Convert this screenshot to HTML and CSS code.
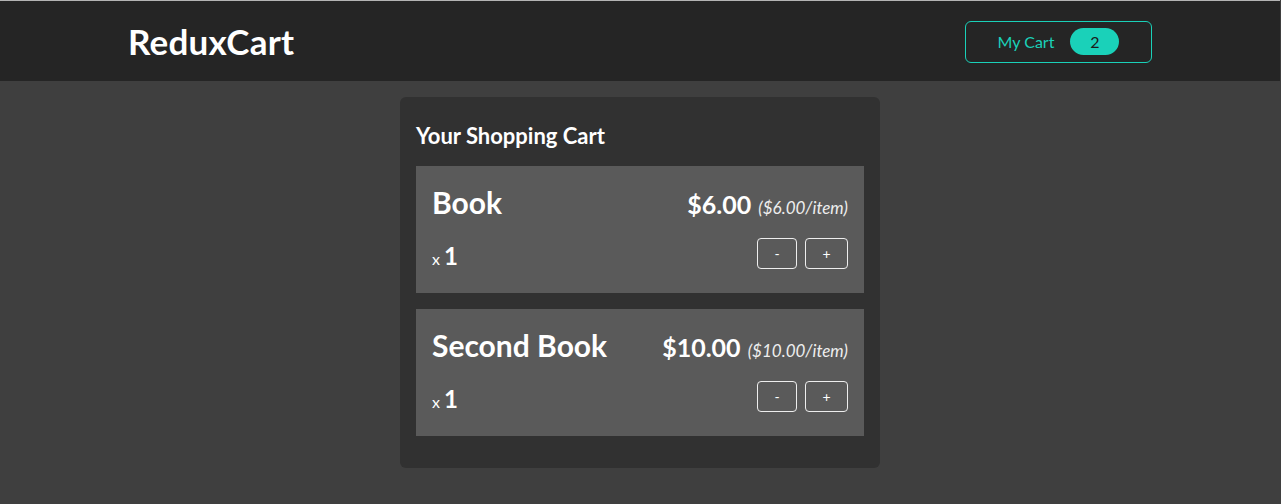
FILE: index.html
```html
<!DOCTYPE html>
<html lang="en">
<head>
<meta charset="utf-8">
<title>ReduxCart</title>
<link rel="stylesheet" href="styles.css">
</head>
<body>
<header class="main-header">
  <h1 class="logo">ReduxCart</h1>
  <button class="cart-button">
    <span>My Cart</span>
    <span class="badge">2</span>
  </button>
</header>
<main>
  <section class="cart">
    <h2 class="cart-title">Your Shopping Cart</h2>
    <ul class="cart-list">
      <li class="item">
        <div class="item-head">
          <h3 class="item-title">Book</h3>
          <div class="price">$6.00 <span class="item-price">($6.00/item)</span></div>
        </div>
        <div class="item-details">
          <div class="quantity">x <span class="qty">1</span></div>
          <div class="actions">
            <button class="act">-</button>
            <button class="act">+</button>
          </div>
        </div>
      </li>
      <li class="item">
        <div class="item-head">
          <h3 class="item-title">Second Book</h3>
          <div class="price">$10.00 <span class="item-price">($10.00/item)</span></div>
        </div>
        <div class="item-details">
          <div class="quantity">x <span class="qty">1</span></div>
          <div class="actions">
            <button class="act">-</button>
            <button class="act">+</button>
          </div>
        </div>
      </li>
    </ul>
  </section>
</main>
</body>
</html>
```
FILE: styles.css
```css
* { box-sizing: border-box; }
html, body { margin: 0; padding: 0; }
body {
  font-family: Lato, "Open Sans", sans-serif;
  background: #3f3f3f;
  color: #fff;
  border-top: 1px solid #b4b4b4;
  margin-right: 1px;
}
.main-header {
  height: 80px;
  background: #252525;
  padding: 0 128px;
  display: flex;
  align-items: center;
  justify-content: space-between;
}
.logo {
  margin: 0;
  font-size: 35px;
  font-weight: 700;
  color: #fff;
  letter-spacing: 0.2px;
}
.cart-button {
  width: 187px;
  height: 42px;
  margin-top: 1px;
  background: transparent;
  border: 1px solid #1ad1b9;
  border-radius: 6px;
  color: #1ad1b9;
  font-family: inherit;
  font-size: 16px;
  display: flex;
  align-items: center;
  justify-content: center;
  gap: 16px;
  padding: 0;
}
.badge {
  background: #1ad1b9;
  color: #1b1b1b;
  border-radius: 14px;
  width: 49px;
  height: 27px;
  display: flex;
  align-items: center;
  justify-content: center;
  font-size: 16px;
}
main { padding-top: 16px; }
.cart {
  width: 480px;
  margin: 0 auto;
  background: #313131;
  border-radius: 6px;
  padding: 16px 16px 32px;
}
.cart-title {
  margin: 12px 0 19px;
  font-size: 22px;
  font-weight: 700;
  line-height: 22px;
}
.cart-list {
  list-style: none;
  margin: 0;
  padding: 0;
  display: flex;
  flex-direction: column;
  gap: 16px;
}
.item {
  background: #5a5a5a;
  padding: 16px 16px 24px;
  height: 127px;
}
.item-head {
  display: flex;
  justify-content: space-between;
  align-items: baseline;
  height: 40px;
  line-height: 40px;
}
.item-title {
  margin: 0;
  font-size: 30px;
  font-weight: 700;
}
.price {
  font-size: 25px;
  font-weight: 700;
}
.item-price {
  font-size: 17px;
  font-weight: 400;
  font-style: italic;
  color: #eee;
  margin-left: 1px;
}
.item-details {
  display: flex;
  justify-content: space-between;
  align-items: center;
  margin-top: 16px;
  height: 31px;
}
.quantity {
  font-size: 16px;
  display: flex;
  align-items: baseline;
  gap: 4px;
  margin-top: 4px;
}
.qty {
  font-size: 24px;
  font-weight: 700;
}
.actions {
  display: flex;
  gap: 8px;
}
.act {
  width: 40px;
  height: 31px;
  background: transparent;
  border: 1px solid #eee;
  border-radius: 4px;
  color: #fff;
  font-family: inherit;
  font-size: 14px;
  padding: 0;
}
.act + .act { width: 43px; }
```
